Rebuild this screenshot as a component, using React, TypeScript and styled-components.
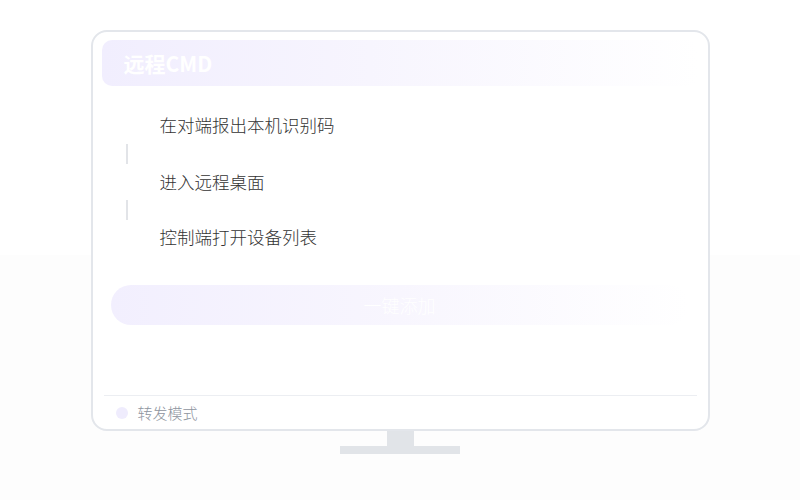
import React from "react";
import styled, { createGlobalStyle } from "styled-components";

const GlobalStyle = createGlobalStyle`
  html, body {
    margin: 0;
    padding: 0;
    height: 100%;
  }
  body {
    background: linear-gradient(#ffffff 0, #ffffff 255px, #fdfdfd 255px, #fdfdfd 100%);
    font-family: "Noto Sans CJK SC", "Noto Sans", sans-serif;
  }
`;

const steps = ["在对端报出本机识别码", "进入远程桌面", "控制端打开设备列表"];

const Page = styled.div`
  width: 800px;
  height: 500px;
  display: flex;
  flex-direction: column;
  align-items: center;
  padding-top: 30px;
  box-sizing: border-box;
`;

const Monitor = styled.div`
  width: 619px;
  height: 401px;
  box-sizing: border-box;
  border: 2px solid #e3e6eb;
  border-radius: 16px;
  background: #ffffff;
  padding: 8px 10px 0 9px;
  display: flex;
  flex-direction: column;
`;

const Header = styled.div`
  height: 46px;
  border-radius: 10px;
  background: linear-gradient(90deg, #f1eefe 0%, #f7f5fe 45%, #ffffff 100%);
  display: flex;
  align-items: center;
  padding-left: 22px;
  color: #ffffff;
  font-size: 21px;
  font-weight: 700;
`;

const Steps = styled.div`
  display: flex;
  flex-direction: column;
  margin-top: 27px;
  padding-left: 58px;
`;

const Step = styled.div`
  height: 24px;
  line-height: 24px;
  font-size: 17.5px;
  font-weight: 300;
  color: #333333;
`;

const Connector = styled.div<{ $gap: number }>`
  height: ${(p) => p.$gap}px;
  display: flex;
  align-items: center;
  margin-left: -34px;

  &::before {
    content: "";
    width: 2px;
    height: 20px;
    background: #e2e4e8;
  }
`;

const AddButton = styled.div`
  margin: 36px 9px 0 9px;
  height: 40px;
  border-radius: 20px;
  background: linear-gradient(90deg, #f2effe 0%, #f8f6fe 50%, #ffffff 100%);
  color: #ffffff;
  font-size: 18px;
  font-weight: 300;
  display: flex;
  align-items: center;
  justify-content: center;
`;

const Spacer = styled.div`
  flex: 1;
`;

const Footer = styled.div`
  border-top: 1px solid #eceef2;
  height: 33px;
  display: flex;
  align-items: center;
  gap: 10px;
  padding-left: 12px;
  margin: 0 1px 0 2px;
  color: #8e949e;
  font-size: 15px;
  font-weight: 300;
`;

const Dot = styled.span`
  width: 12px;
  height: 12px;
  border-radius: 50%;
  background: #efecfd;
`;

const Neck = styled.div`
  width: 27px;
  height: 15px;
  background: #e1e4e8;
`;

const Base = styled.div`
  width: 120px;
  height: 8px;
  background: #e1e4e8;
`;

export default function App() {
  return (
    <>
      <GlobalStyle />
      <Page>
        <Monitor>
          <Header>远程CMD</Header>
          <Steps>
            {steps.map((s, i) => (
              <React.Fragment key={s}>
                {i > 0 && <Connector $gap={i === 1 ? 33 : 31} />}
                <Step>{s}</Step>
              </React.Fragment>
            ))}
          </Steps>
          <AddButton>一键添加</AddButton>
          <Spacer />
          <Footer>
            <Dot />
            转发模式
          </Footer>
        </Monitor>
        <Neck />
        <Base />
      </Page>
    </>
  );
}
